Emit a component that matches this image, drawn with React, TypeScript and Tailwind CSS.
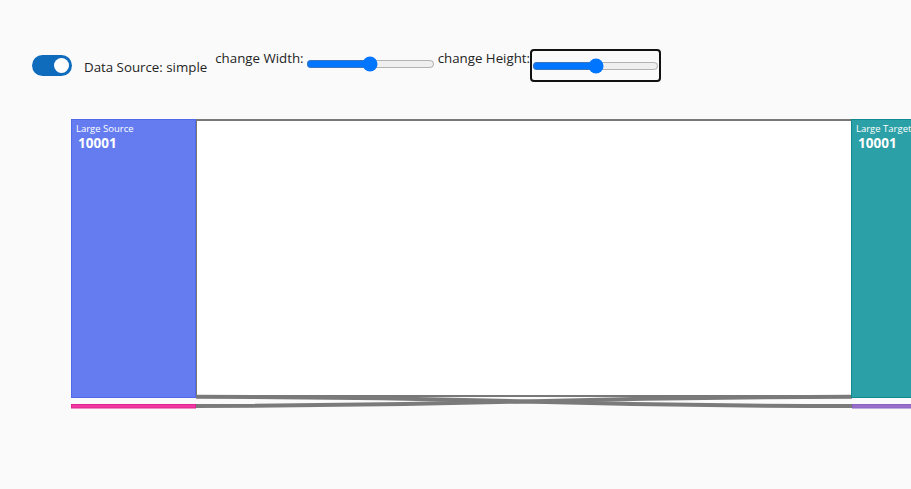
import { useState } from "react";

const font = { fontFamily: '"Open Sans", "Noto Sans", sans-serif' };

function Toggle({ on, onChange }: { on: boolean; onChange: (v: boolean) => void }) {
  return (
    <button
      onClick={() => onChange(!on)}
      className={`mt-[6px] flex h-[21px] w-[40px] shrink-0 items-center rounded-full px-[3px] ${
        on ? "justify-end bg-[#0f6cbd]" : "justify-start bg-[#8a8a8a]"
      }`}
    >
      <span className="block h-[15px] w-[15px] rounded-full bg-white" />
    </button>
  );
}

function Sankey({ w, h }: { w: number; h: number }) {
  // page y minus 110
  const big = { x: 196, y: 10, w: 656, h: 276 };
  const mid = (196 + 852) / 2;
  return (
    <svg width={911} height={310} className="block overflow-hidden" style={{ width: w, height: h }}>
      {/* large -> large */}
      <rect x={big.x} y={big.y} width={big.w} height={big.h} fill="#ffffff" stroke="#787878" strokeWidth={2} />
      {/* large source -> small target */}
      <path d={`M196 286.8 C${mid} 286.8 ${mid} 296 852 296`} fill="none" stroke="#7a7a7a" strokeWidth={4} />
      {/* small source -> large target */}
      <path d={`M196 296 C${mid} 296 ${mid} 286.8 852 286.8`} fill="none" stroke="#7a7a7a" strokeWidth={4} />

      {/* nodes */}
      <rect x={71.5} y={9.5} width={124} height={278} fill="#647cf0" stroke="#5068ea" />
      <rect x={71.5} y={294.5} width={124} height={3.5} fill="#f03aa2" stroke="#e0238f" />
      <rect x={851.5} y={9.5} width={80} height={278} fill="#2ba0a6" stroke="#0f8a90" />
      <rect x={852.5} y={294.5} width={80} height={3.5} fill="#9870cb" stroke="#8a62c2" />

      <g style={font} fill="#ffffff">
        <text x={76} y={21.5} fontSize={9.5}>Large Source</text>
        <text x={78} y={37.5} fontSize={13.5} fontWeight={700}>10001</text>
        <text x={856} y={21.5} fontSize={9.5}>Large Target</text>
        <text x={858} y={37.5} fontSize={13.5} fontWeight={700}>10001</text>
      </g>
    </svg>
  );
}

export default function App() {
  const [simple, setSimple] = useState(true);
  const [width, setWidth] = useState(50);
  const [height, setHeight] = useState(50);

  return (
    <div className="min-h-screen overflow-hidden bg-[#fafafa] pt-[49px] text-[#242424]" style={font}>
      <div className="flex h-[33px] items-start pl-[32px] text-[13.3px]">
        <Toggle on={simple} onChange={setSimple} />
        <span className="ml-[12px] mt-[8px] leading-[20px]">Data Source: {simple ? "simple" : "complex"}</span>
        <label className="ml-[8px] leading-[19px]">change Width:</label>
        <input
          type="range"
          min={0}
          max={100}
          value={width}
          onChange={(e) => setWidth(Number(e.target.value))}
          className="mx-[2px] mt-[7px] w-[129px]"
        />
        <label className="ml-[1px] leading-[19px]">change Height:</label>
        <div className="flex h-[33px] w-[131px] items-center rounded-[4px] border-2 border-[#111111]">
          <input
            type="range"
            min={0}
            max={100}
            value={height}
            onChange={(e) => setHeight(Number(e.target.value))}
            className="m-0 w-[127px]"
          />
        </div>
      </div>
      <div className="mt-[28px]">
        <Sankey w={911} h={310} />
      </div>
    </div>
  );
}
